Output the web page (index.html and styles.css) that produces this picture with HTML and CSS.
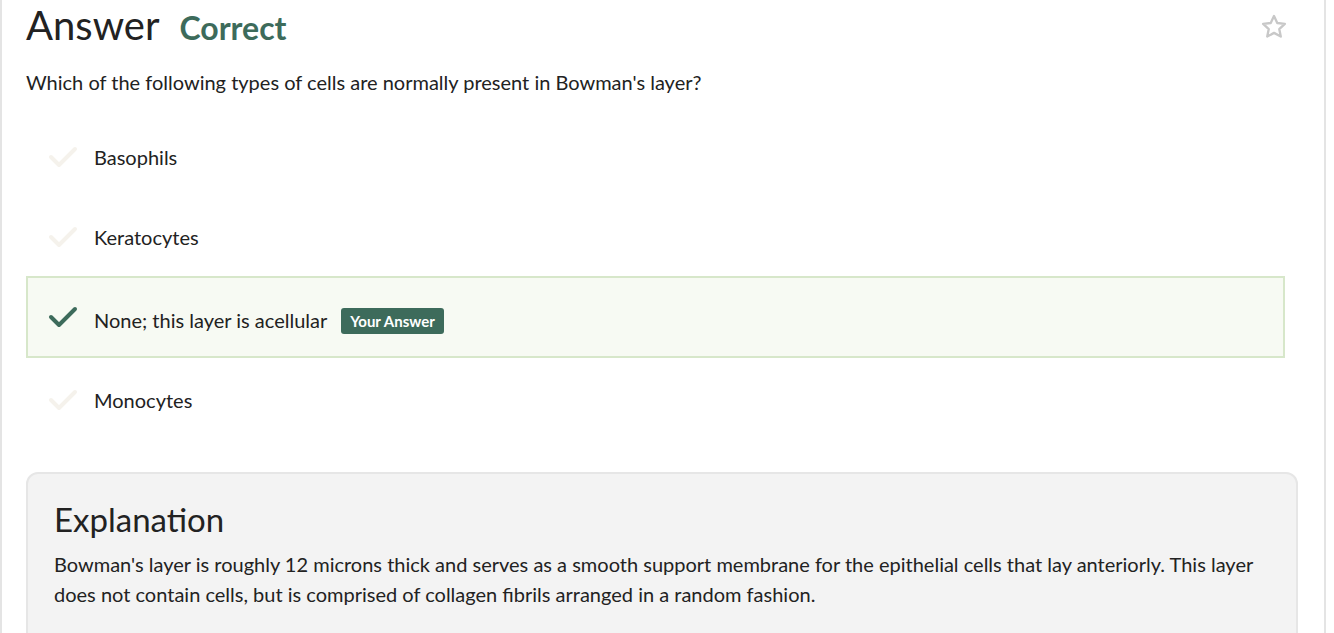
FILE: index.html
```html
<!DOCTYPE html>
<html>
<head>
<meta charset="utf-8">
<link rel="stylesheet" href="styles.css">
</head>
<body>
<div class="card">
  <div class="header">
    <h1 class="title">Answer</h1>
    <span class="status">Correct</span>
    <svg class="star" viewBox="0 0 24 24" width="28" height="28"><path d="M12 2.6l2.8 5.95 6.5.78-4.8 4.45 1.3 6.42L12 17.05l-5.8 3.15 1.3-6.42-4.8-4.45 6.5-.78z" fill="none" stroke="#c8c8c8" stroke-width="2" stroke-linejoin="round"/></svg>
  </div>
  <p class="question">Which of the following types of cells are normally present in Bowman's layer?</p>
  <ul class="options">
    <li class="option">
      <svg class="check" viewBox="0 0 30 24" width="30" height="24"><path d="M3 12l8 8L27 4" fill="none" stroke="currentColor" stroke-width="4" stroke-linecap="round" stroke-linejoin="round"/></svg>
      <span class="label">Basophils</span>
    </li>
    <li class="option">
      <svg class="check" viewBox="0 0 30 24" width="30" height="24"><path d="M3 12l8 8L27 4" fill="none" stroke="currentColor" stroke-width="4" stroke-linecap="round" stroke-linejoin="round"/></svg>
      <span class="label">Keratocytes</span>
    </li>
    <li class="option selected">
      <svg class="check" viewBox="0 0 30 24" width="30" height="24"><path d="M3 12l8 8L27 4" fill="none" stroke="currentColor" stroke-width="4" stroke-linecap="round" stroke-linejoin="round"/></svg>
      <span class="label">None; this layer is acellular</span>
      <span class="badge">Your Answer</span>
    </li>
    <li class="option">
      <svg class="check" viewBox="0 0 30 24" width="30" height="24"><path d="M3 12l8 8L27 4" fill="none" stroke="currentColor" stroke-width="4" stroke-linecap="round" stroke-linejoin="round"/></svg>
      <span class="label">Monocytes</span>
    </li>
  </ul>
  <div class="explanation">
    <h2 class="exp-title">Explanation</h2>
    <p class="exp-text">Bowman's layer is roughly 12 microns thick and serves as a smooth support membrane for the epithelial cells that lay anteriorly. This layer does not contain cells, but is comprised of collagen fibrils arranged in a random fashion.</p>
  </div>
</div>
</body>
</html>
```

FILE: styles.css
```css
* { box-sizing: border-box; }
html, body { margin: 0; padding: 0; background: #fff; }
body {
  font-family: "Lato", "Open Sans", sans-serif;
  color: #222;
  height: 633px;
  overflow: hidden;
}
.card {
  width: 1326px;
  min-height: 700px;
  border-left: 2px solid #e4e4e4;
  border-right: 2px solid #e4e4e4;
  padding: 0 26px 0 24px;
}
.header {
  display: flex;
  align-items: baseline;
  height: 54px;
}
.title {
  margin: 0;
  font-size: 40px;
  font-weight: 400;
  line-height: 50px;
  color: #222;
}
.status {
  margin-left: 20px;
  font-size: 32px;
  font-weight: 700;
  color: #3d6b5b;
}
.star {
  margin-left: auto;
  margin-right: 10px;
  align-self: flex-start;
  margin-top: 13px;
}
.question {
  margin: 13px 0 0;
  font-size: 20px;
  line-height: 30px;
}
.options {
  list-style: none;
  margin: 20px 0 0;
  padding: 0;
  width: 1259px;
}
.option {
  display: flex;
  align-items: center;
  height: 80px;
  border: 2px solid transparent;
  padding-left: 20px;
  font-size: 20px;
}
.option .check {
  color: #f5f2ec;
  margin-right: 16px;
  flex-shrink: 0;
}
.option.selected {
  background: #f7faf3;
  border-color: #d7e7ca;
  height: 82px;
  margin-top: -1px;
  margin-bottom: 2px;
  padding-top: 5px;
}
.option.selected .check { color: #3d6b5b; margin-top: -6px; }
.label { line-height: 30px; }
.badge {
  margin-left: 14px;
  margin-top: 3px;
  background: #3d6b5b;
  color: #fff;
  font-size: 15px;
  font-weight: 700;
  line-height: 26px;
  padding: 0 9px;
  border-radius: 3px;
}
.explanation {
  margin-top: 32px;
  width: 1272px;
  background: #f3f3f3;
  border: 2px solid #e6e6e6;
  border-radius: 12px;
  padding: 21px 26px 40px;
}
.exp-title {
  margin: 0;
  font-size: 33px;
  font-weight: 400;
  line-height: 48px;
}
.exp-text {
  margin: 6px 0 0;
  font-size: 20px;
  line-height: 30px;
}
```
